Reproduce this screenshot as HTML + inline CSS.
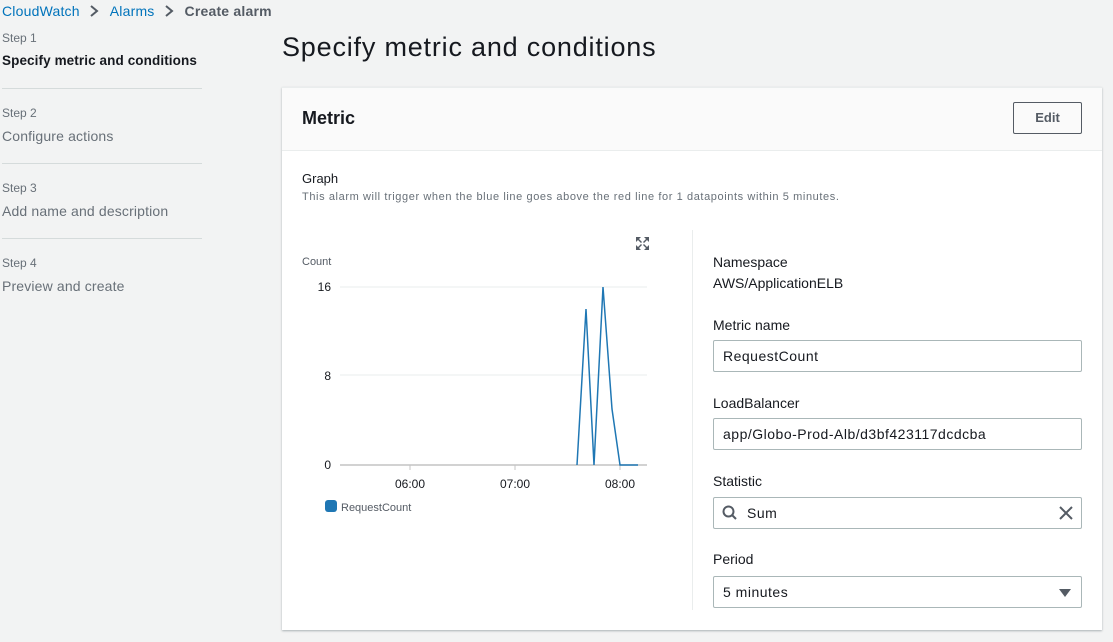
<!DOCTYPE html>
<html><head><meta charset="utf-8"><style>
*{box-sizing:border-box;margin:0;padding:0}
body{width:1113px;height:642px;background:#f2f3f3;font-family:"Liberation Sans",sans-serif;color:#16191f;position:relative;overflow:hidden}
.a{position:absolute}
.bc{top:3px;left:2px;font-size:14px;white-space:nowrap;letter-spacing:.2px}
.bc .l{color:#0073bb}
.step{left:2px;font-size:12px;color:#687078}
.sn{left:2px;font-size:14px;color:#687078;letter-spacing:.15px}
.hr{left:2px;width:200px;height:1px;background:#d5dbdb}
.card{left:282px;top:87px;width:820px;height:543px;background:#fff;box-shadow:0 1px 2px rgba(0,28,36,.3);border-top:1px solid #eaeded}
.hdr{left:0;top:0;width:820px;height:63px;background:#fafafa;border-bottom:1px solid #eaeded}
.lbl{font-size:14px;color:#16191f}
.inp{width:369px;height:32px;border:1px solid #aab7b8;border-radius:2px;font-size:14px;padding:7px 9px;background:#fff;letter-spacing:.5px}
</style></head><body>
<div class="a bc"><span class="l">CloudWatch</span><svg width="30" height="14" style="vertical-align:-2px"><path d="M11 2l6 5-6 5" fill="none" stroke="#545b64" stroke-width="2"/></svg><span class="l">Alarms</span><svg width="30" height="14" style="vertical-align:-2px"><path d="M11 2l6 5-6 5" fill="none" stroke="#545b64" stroke-width="2"/></svg><span style="color:#545b64;font-weight:bold">Create alarm</span></div>
<div class="a step" style="top:31px">Step 1</div>
<div class="a sn" style="top:53px;color:#16191f;font-weight:bold;font-size:13.5px;letter-spacing:.1px">Specify metric and conditions</div>
<div class="a hr" style="top:88px"></div>
<div class="a step" style="top:106px">Step 2</div>
<div class="a sn" style="top:128px">Configure actions</div>
<div class="a hr" style="top:163px"></div>
<div class="a step" style="top:181px">Step 3</div>
<div class="a sn" style="top:203px">Add name and description</div>
<div class="a hr" style="top:238px"></div>
<div class="a step" style="top:256px">Step 4</div>
<div class="a sn" style="top:278px">Preview and create</div>
<div class="a" style="left:282px;top:32px;font-size:27px;color:#16191f;letter-spacing:.8px">Specify metric and conditions</div>
<div class="a card">
<div class="a hdr"></div>
<div class="a" style="left:20px;top:20px;font-size:18px;font-weight:bold">Metric</div>
<div class="a" style="left:731px;top:14px;width:69px;height:32px;border:1px solid #545b64;border-radius:2px;font-size:13px;font-weight:bold;color:#545b64;text-align:center;line-height:30px">Edit</div>
<div class="a lbl" style="left:20px;top:83px;font-size:13px">Graph</div>
<div class="a" style="left:20px;top:103px;font-size:11px;color:#687078;letter-spacing:.6px;white-space:nowrap">This alarm will trigger when the blue line goes above the red line for 1 datapoints within 5 minutes.</div>
<div class="a" style="left:410px;top:142px;width:1px;height:380px;background:#eaeded"></div>
<div class="a lbl" style="left:431px;top:166px">Namespace</div>
<div class="a lbl" style="left:431px;top:187px">AWS/ApplicationELB</div>
<div class="a lbl" style="left:431px;top:229px">Metric name</div>
<div class="a inp" style="left:431px;top:252px">RequestCount</div>
<div class="a lbl" style="left:431px;top:307px">LoadBalancer</div>
<div class="a inp" style="left:431px;top:330px">app/Globo-Prod-Alb/d3bf423117dcdcba</div>
<div class="a lbl" style="left:431px;top:385px">Statistic</div>
<div class="a inp" style="left:431px;top:409px;padding-left:33px">Sum</div>
<svg class="a" style="left:440px;top:417px" width="16" height="16"><circle cx="6.5" cy="6.5" r="5" fill="none" stroke="#545b64" stroke-width="2"/><line x1="10" y1="10" x2="14" y2="14" stroke="#545b64" stroke-width="2"/></svg>
<svg class="a" style="left:776px;top:417px" width="16" height="16"><path d="M2 2L14 14M14 2L2 14" stroke="#545b64" stroke-width="2"/></svg>
<div class="a lbl" style="left:431px;top:463px">Period</div>
<div class="a inp" style="left:431px;top:488px">5 minutes</div>
<svg class="a" style="left:776px;top:500px" width="14" height="10"><path d="M1 1H13L7 9Z" fill="#545b64"/></svg>
</div>
<svg class="a" style="left:0;top:0" width="1113" height="642">
<g fill="#545b64"><path d="M636 237h5l-2 2 3 3-1 1-3-3-2 2zM649 237v5l-2-2-3 3-1-1 3-3-2-2zM636 250v-5l2 2 3-3 1 1-3 3 2 2zM649 250h-5l2-2-3-3 1-1 3 3 2-2z"/></g>
<text x="302" y="265" font-size="11" fill="#545b64" font-family="Liberation Sans">Count</text>
<g stroke="#eaeded"><line x1="340" y1="287" x2="647" y2="287"/><line x1="340" y1="375" x2="647" y2="375"/></g>
<line x1="340" y1="465" x2="647" y2="465" stroke="#c4c4c4" stroke-width="1.5"/>
<g stroke="#c4c4c4"><line x1="410" y1="465" x2="410" y2="470"/><line x1="515" y1="465" x2="515" y2="470"/><line x1="620" y1="465" x2="620" y2="470"/></g>
<g font-size="12" fill="#16191f" font-family="Liberation Sans" text-anchor="end"><text x="331" y="291">16</text><text x="331" y="380">8</text><text x="331" y="469">0</text></g>
<g font-size="12" fill="#16191f" font-family="Liberation Sans" text-anchor="middle"><text x="410" y="488">06:00</text><text x="515" y="488">07:00</text><text x="620" y="488">08:00</text></g>
<polyline points="577,465 586,309 594,465 603,287 612,409 620,465 638,465" fill="none" stroke="#1f77b4" stroke-width="1.5"/>
<rect x="325" y="500" width="12" height="12" rx="3" fill="#1f77b4"/>
<text x="341" y="511" font-size="11" fill="#545b64" font-family="Liberation Sans">RequestCount</text>
</svg>
</body></html>
